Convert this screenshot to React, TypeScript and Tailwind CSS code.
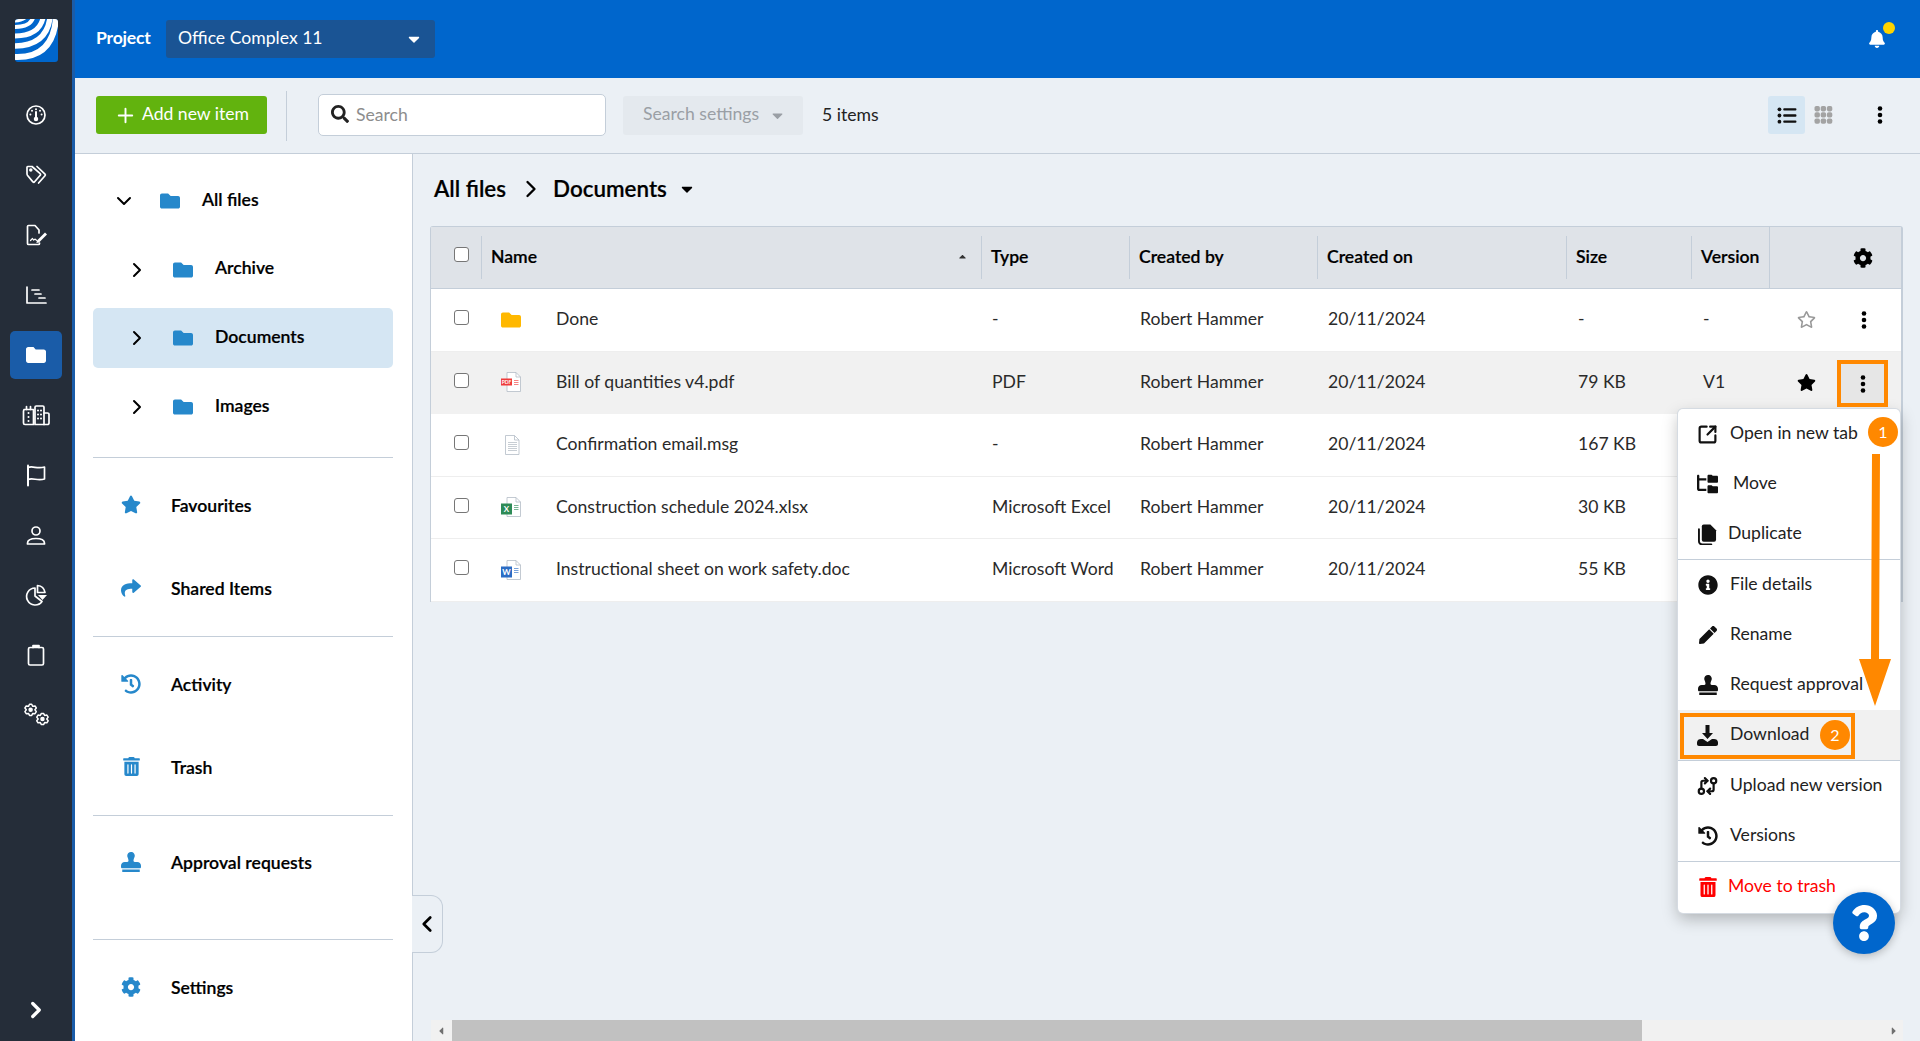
import React from "react";
import {
  FaStar, FaRegStar, FaShare, FaHistory, FaTrashAlt, FaStamp, FaCog, FaFolder, FaBell, FaSearch,
  FaCaretDown, FaInfoCircle, FaPen, FaCaretLeft, FaCaretRight, FaCaretUp, FaQuestion,
} from "react-icons/fa";
import { FaFolderTree } from "react-icons/fa6";
import { ChevronDown, ChevronLeft, ChevronRight, Plus, SquareArrowOutUpRight, GitCompareArrows } from "lucide-react";

const S = { fill: "none", stroke: "currentColor", strokeWidth: 1.7, strokeLinecap: "round" as const, strokeLinejoin: "round" as const };

function RailIcon({ children }: { children: React.ReactNode }) {
  return (
    <svg viewBox="0 0 24 24" className="w-6 h-6 text-white" {...S}>
      {children}
    </svg>
  );
}

function Kebab({ cls }: { cls?: string }) {
  return (
    <svg viewBox="0 0 6 18" className={`w-[6px] h-[18px] ${cls ?? ""}`} fill="#000">
      <circle cx="3" cy="2.500" r="2.300" />
      <circle cx="3" cy="9" r="2.300" />
      <circle cx="3" cy="15.500" r="2.300" />
    </svg>
  );
}

const railIcons: React.ReactNode[] = [
  <RailIcon key="g">
    <circle cx="12" cy="12" r="9" />
    <path d="M12 9v6" strokeWidth="2" />
    <circle cx="12" cy="16" r="1.400" fill="currentColor" />
    <path d="M8 7.800h.01M16 7.800h.01M6.400 11.500h.01M17.600 11.500h.01M12 6.200h.01" strokeWidth="2" />
  </RailIcon>,
  <RailIcon key="t">
    <path d="M3 7.500V4.200C3 3.800 3.300 3.500 3.700 3.500H8l8.200 7.200c.5.400.5 1.100 0 1.600l-5.600 6.500c-.4.500-1.200.5-1.700.1L3.400 12.200A3 3 0 0 1 3 10.600Z" />
    <path d="M13 3.500l8 7.600c.5.5.5 1.100 0 1.600L14.600 20" />
    <circle cx="6.800" cy="7" r=".9" fill="currentColor" />
  </RailIcon>,
  <RailIcon key="f">
    <path d="M15 10V7l-4-4.500H4.500a1 1 0 0 0-1 1v17a1 1 0 0 0 1 1h10a1 1 0 0 0 1-1V20" />
    <path d="M6.500 17.500l2-2 1.200 1.600 1.200-1 1.600 1.200" strokeWidth="1.200" />
    <path d="M13 17.500l8-8 2 2-8 8-2.600.6Z" fill="currentColor" stroke="none" />
  </RailIcon>,
  <RailIcon key="c">
    <path d="M3 4v16h19" />
    <path d="M8 7h7M11 11h6M15 15h6" />
  </RailIcon>,
  <svg key="fo" viewBox="0 0 24 24" className="w-6 h-6 text-white" fill="currentColor">
    <path d="M2 6.200C2 5 3 4 4.200 4h5.300l2.200 2.400h8.100C21 6.400 22 7.400 22 8.600v9.200c0 1.200-1 2.200-2.200 2.200H4.200C3 20 2 19 2 17.800Z" />
  </svg>,
  <svg key="b" viewBox="0 0 30 24" className="w-[30px] h-6 text-white" {...S}>
    <path d="M3 6.500h9.500V21.500H4a1.500 1.500 0 0 1-1.500-1.500V8A1.500 1.500 0 0 1 4 6.500Z" />
    <path d="M5.500 6.500V3.500M9.500 6.500V3.500" />
    <path d="M14 21.500V4.200A1.200 1.200 0 0 1 15.200 3h6.600A1.200 1.200 0 0 1 23 4.200V21.500Z" />
    <path d="M23 10h3.500a1.500 1.500 0 0 1 1.500 1.500v8.500a1.500 1.500 0 0 1-1.500 1.500H23" />
    <path d="M7.500 10h.01M7.500 14h.01M7.500 18h.01M17 7.500h.01M20 7.500h.01M17 11.500h.01M20 11.500h.01M17 15.500h.01M20 15.500h.01" strokeWidth="2" />
  </svg>,
  <RailIcon key="fl">
    <path d="M4 2.500v20" strokeWidth="2" />
    <path d="M4 4.500c5-2 9 1.800 16.500-.5v12c-7 2.200-11.500-1.500-16.500 .5" />
  </RailIcon>,
  <RailIcon key="u">
    <circle cx="12" cy="8" r="4" />
    <path d="M3.500 21v-.8c0-3 3-4.700 8.500-4.700s8.500 1.700 8.500 4.700v.8Z" />
  </RailIcon>,
  <RailIcon key="p">
    <path d="M11 5a8.500 8.500 0 1 0 7 13.500l-7-5.500Z" />
    <path d="M13.500 2.500A8.500 8.500 0 0 1 21 9.500h-7.500Z" />
    <path d="M14 12h9l-4.500 5Z" fill="currentColor" stroke="none" />
  </RailIcon>,
  <RailIcon key="cl">
    <rect x="4.500" y="4.500" width="15" height="17.500" rx="1.500" />
    <path d="M9 4.500V2.500h6v2" fill="currentColor" />
  </RailIcon>,
  <svg key="co" viewBox="0 0 26 22" className="w-[28px] h-[24px] text-white" {...S} strokeWidth="1.400">
    <path d="M9 1l1 1.900 2.100-.3 1.200 1.900-1.300 1.700 1.300 1.700-1.200 1.900-2.100-.3-1 1.900H7l-1-1.900-2.100.3L2.700 7.900 4 6.200 2.700 4.500l1.200-1.900L6 2.900 7 1Z" />
    <circle cx="8" cy="6.200" r="1.400" fill="currentColor" />
    <path d="M20 9.500l1 1.900 2.100-.3 1.200 1.900-1.300 1.700 1.300 1.700-1.200 1.900-2.100-.3-1 1.900h-2l-1-1.900-2.100.3-1.200-1.900 1.300-1.700-1.300-1.700 1.200-1.900 2.100.3 1-1.900Z" />
    <circle cx="19" cy="14.700" r="1.400" fill="currentColor" />
  </svg>,
];

function Logo() {
  return (
    <div className="w-[43px] h-[43px] rounded-[3px] bg-[#0066cc] overflow-hidden">
      <svg viewBox="0 0 43 43" className="w-full h-full" fill="none" stroke="white">
        <path d="M-1 2Q6 2 10-1" strokeWidth="3" />
        <path d="M-1 8Q15 8 18-1" strokeWidth="4" />
        <path d="M-1 17Q24 17 28-1" strokeWidth="5" />
        <path d="M-1 27Q31 27 35-1" strokeWidth="5.500" />
        <path d="M-1 38Q38 40 41-1" strokeWidth="6" />
      </svg>
    </div>
  );
}

function Rail() {
  return (
    <div className="w-[72px] h-full bg-[#252d39] flex flex-col items-center shrink-0">
      <div className="h-[85px] pt-[19px] shrink-0">
        <Logo />
      </div>
      {railIcons.map((ic, i) => (
        <div
          key={i}
          className={
            i === 4
              ? "w-[52px] h-[48px] my-[6px] rounded-[5px] bg-[#1a5ca8] flex items-center justify-center shrink-0"
              : "w-[52px] h-[60px] flex items-center justify-center shrink-0"
          }
        >
          {ic}
        </div>
      ))}
      <div className="mt-auto mb-[18px] text-white">
        <ChevronRight size={26} strokeWidth={3} />
      </div>
    </div>
  );
}

function Header() {
  return (
    <div className="h-[78px] bg-[#0066cc] flex items-center pl-[21px] pr-[34px] shrink-0">
      <span className="text-white font-bold text-[17.6px] tracking-[-0.2px] w-[70px] -mt-[1px]">Project</span>
      <div className="w-[269px] h-[38px] rounded-[3px] bg-[#1a5494] text-white text-[17.6px] flex items-center justify-between pl-3 pr-[12px] -mt-[1px]">
        <span className="-mt-[1px]">Office Complex 11</span>
        <FaCaretDown size={18} />
      </div>
      <div className="ml-auto relative text-white">
        <FaBell size={18} />
        <span className="absolute -top-[8px] left-[15px] w-3 h-3 rounded-full bg-[#ffd400]" />
      </div>
    </div>
  );
}

function Toolbar() {
  return (
    <div className="h-[76px] bg-[#ebf0f5] border-b border-[#c4ced9] flex items-center pl-[21px] pr-[37px] shrink-0">
      <button className="w-[171px] h-[38px] rounded-[3px] bg-[#62b30e] text-white text-[17.6px] flex items-center justify-center gap-[5px] -mt-[1px]">
        <Plus size={23} strokeWidth={2} />
        <span className="-mt-[2px]">Add new item</span>
      </button>
      <div className="w-px h-[50px] bg-[#c4ced9] ml-[19px] mr-[31px]" />
      <div className="w-[288px] h-[42px] rounded-[5px] bg-white border border-[#c4ced9] flex items-center pl-[12px] gap-[7px] text-[17.6px] text-[#8d8d8d] -mt-[1px]">
        <FaSearch size={18} className="text-[#222] -mt-[3px]" />
        Search
      </div>
      <div className="w-[180px] h-[39px] ml-[17px] rounded-[3px] bg-[#e4e9ee] text-[#9a9fa5] text-[17.6px] flex items-center pl-[20px] gap-[10px] -mt-[1px]">
        <span className="-mt-[1px]">Search settings</span>
        <FaCaretDown size={17} />
      </div>
      <span className="ml-[19px] text-[17.6px] text-[#222] -mt-[1px]">5 items</span>
      <div className="ml-auto w-[37px] h-[38px] rounded-[3px] bg-[#d5e6f3] flex items-center justify-center -mt-[1px]">
        <svg viewBox="0 0 20 18" className="w-5 h-[17px]" fill="#111">
          <circle cx="2" cy="2.500" r="2" /><circle cx="2" cy="9" r="2" /><circle cx="2" cy="15.500" r="2" />
          <rect x="6" y="1.300" width="14" height="2.400" rx="1" /><rect x="6" y="7.800" width="14" height="2.400" rx="1" /><rect x="6" y="14.300" width="14" height="2.400" rx="1" />
        </svg>
      </div>
      <div className="ml-[9px] w-[19px] h-[18px] -mt-[1px]">
        <svg viewBox="0 0 18 18" className="w-full h-full" fill="#a3a3a3">
          {[0, 6.2, 12.4].flatMap((y) =>
            [0, 6.2, 12.4].map((x) => <rect key={`${x}-${y}`} x={x} y={y} width="5.400" height="5.400" rx="1.800" />)
          )}
        </svg>
      </div>
      <Kebab cls="ml-[44px] -mt-[1px]" />
    </div>
  );
}

const BOLD = "font-semibold [-webkit-text-stroke:0.2px_black]";

function TreeRow({ label, chevron, active, first }: { label: string; chevron: "down" | "right"; active?: boolean; first?: boolean }) {
  return (
    <div
      className={`h-[60px] rounded-[5px] flex items-center text-[17.6px] text-black mb-[8.600px] ${BOLD} ${active ? "bg-[#d5e6f3]" : ""} ${
        first ? "pl-[19px]" : "pl-[32px]"
      }`}
    >
      {chevron === "down" ? <ChevronDown size={24} strokeWidth={2} /> : <ChevronRight size={24} strokeWidth={2} />}
      <FaFolder size={20} className="text-[#2688cb] ml-[24px]" />
      <span className="-mt-[2px] ml-[22px]">{label}</span>
    </div>
  );
}

function NavRow({ icon, label }: { icon: React.ReactNode; label: string }) {
  return (
    <div className={`h-[83px] flex items-center pl-[28px] pt-[2px] text-[17.6px] text-black ${BOLD}`}>
      <span className="w-[20px] flex justify-center text-[#2688cb] -mt-[2px]">{icon}</span>
      <span className="ml-[30px]">{label}</span>
    </div>
  );
}

function Divider() {
  return <div className="h-px bg-[#c4ced9] shrink-0" />;
}

function Sidebar() {
  return (
    <div className="w-[338px] h-full bg-white border-r border-[#c4ced9] pl-[18px] pr-[19px] pt-[17px] shrink-0 flex flex-col">
      <TreeRow label="All files" chevron="down" first />
      <TreeRow label="Archive" chevron="right" />
      <TreeRow label="Documents" chevron="right" active />
      <TreeRow label="Images" chevron="right" />
      <div className="mt-[12px]"><Divider /></div>
      <div className="pt-[5px] pb-[7px]">
        <NavRow icon={<FaStar size={21} />} label="Favourites" />
        <NavRow icon={<FaShare size={20} />} label="Shared Items" />
      </div>
      <Divider />
      <div className="pt-[5px] pb-[7px]">
        <NavRow icon={<FaHistory size={20} />} label="Activity" />
        <NavRow icon={<FaTrashAlt size={19} />} label="Trash" />
      </div>
      <Divider />
      <div className="pt-[4px] pb-[36px]">
        <NavRow icon={<FaStamp size={20} />} label="Approval requests" />
      </div>
      <Divider />
      <div className="pt-[5px]">
        <NavRow icon={<FaCog size={20} />} label="Settings" />
      </div>
    </div>
  );
}

const COLS = ["w-[50px]", "w-[500px]", "w-[148px]", "w-[188px]", "w-[249px]", "w-[125px]", "w-[78px]", "w-[133px]"];

function HeadCell({ i, children }: { i: number; children?: React.ReactNode }) {
  return <div className={`${COLS[i]} h-full flex items-center shrink-0`}>{children}</div>;
}

function Checkbox() {
  return <span className="block w-[15px] h-[15px] rounded-[3px] border border-[#767676] bg-white -mt-[4px]" />;
}

function HeaderRow() {
  const labels = ["Type", "Created by", "Created on", "Size", "Version"];
  return (
    <div className={`h-[62px] flex bg-[#dfe3e8] border-b border-[#c4ced9] text-[17.6px] text-black ${BOLD}`}>
      <HeadCell i={0}>
        <div className="pl-[23px] -mt-[2px]"><Checkbox /></div>
      </HeadCell>
      <div className={`${COLS[1]} relative flex items-center shrink-0 pl-[10px]`}>
        <span>Name</span>
        <FaCaretUp size={11} className="absolute right-[13px] top-[24px] text-[#333]" />
        <span className="absolute left-0 top-[9px] bottom-[9px] w-px bg-[#c4ced9]" />
      </div>
      {labels.map((l, k) => (
        <div key={l} className={`${COLS[k + 2]} relative flex items-center shrink-0 pl-[10px]`}>
          <span>{l}</span>
          <span className="absolute left-0 top-[9px] bottom-[9px] w-px bg-[#c4ced9]" />
        </div>
      ))}
      <div className="flex-1 relative flex items-center justify-end pr-[28px] border-l border-[#c4ced9]">
        <FaCog size={20} />
      </div>
    </div>
  );
}

function FileIcon({ kind }: { kind: string }) {
  if (kind === "folder") return <FaFolder size={20} className="text-[#ffb800]" />;
  const tag: Record<string, [string, string]> = {
    pdf: ["#ef3b3b", "PDF"],
    xls: ["#2e8b57", "X"],
    doc: ["#2b6cc4", "W"],
  };
  const t = tag[kind];
  return (
    <svg viewBox="0 0 20 20" className="w-5 h-5">
      <path d="M6 .5h9l4.500 4.500v14.500h-13.500Z" fill="#fff" stroke="#b4bcc6" strokeWidth="0.800" transform={t ? "" : "translate(-1.500 0)"} />
      <path d="M15 .5v4.500h4.500" fill="none" stroke="#b4bcc6" strokeWidth="0.800" transform={t ? "" : "translate(-1.500 0)"} />
      {t ? (
        <>
          <path d="M13 8.500h4.500M13 10.500h4.500M13 12.500h4.500" stroke={t[0]} strokeWidth="0.900" opacity="0.700" />
          <rect x="0" y="6.500" width="11" height={kind === "pdf" ? 7 : 11} fill={t[0]} />
          <text x="5.500" y={kind === "pdf" ? 12 : 14.500} fontSize={kind === "pdf" ? 5 : 8} fontWeight="700" fill="#fff" textAnchor="middle" fontFamily="Lato">
            {t[1]}
          </text>
        </>
      ) : (
        <path d="M7 7.500h9M7 9.500h9M7 11.500h9M7 13.500h9M7 15.500h9" stroke="#c2c8cf" strokeWidth="0.900" />
      )}
    </svg>
  );
}

type Row = { kind: string; name: string; type: string; size: string; ver: string; starred?: boolean; hover?: boolean };

const rows: Row[] = [
  { kind: "folder", name: "Done", type: "-", size: "-", ver: "-" },
  { kind: "pdf", name: "Bill of quantities v4.pdf", type: "PDF", size: "79 KB", ver: "V1", starred: true, hover: true },
  { kind: "file", name: "Confirmation email.msg", type: "-", size: "167 KB", ver: "" },
  { kind: "xls", name: "Construction schedule 2024.xlsx", type: "Microsoft Excel", size: "30 KB", ver: "" },
  { kind: "doc", name: "Instructional sheet on work safety.doc", type: "Microsoft Word", size: "55 KB", ver: "" },
];

function TableRow({ r }: { r: Row }) {
  return (
    <div
      className={`h-[62.500px] flex items-center text-[17.6px] text-[#2a2a2a] border-b ${
        r.hover ? "bg-[#f1f1f1] border-[#f1f1f1]" : "bg-white border-[#eeeeee]"
      }`}
    >
      <HeadCell i={0}>
        <div className="pl-[23px]"><Checkbox /></div>
      </HeadCell>
      <div className={`${COLS[1]} flex items-center shrink-0`}>
        <span className="w-[20px] ml-[20px] flex justify-center"><FileIcon kind={r.kind} /></span>
        <span className="ml-[35px] -mt-[0.500px]">{r.name}</span>
      </div>
      <div className={`${COLS[2]} pl-[11px] shrink-0 -mt-[0.500px]`}>{r.type}</div>
      <div className={`${COLS[3]} pl-[11px] shrink-0 -mt-[0.500px]`}>Robert Hammer</div>
      <div className={`${COLS[4]} pl-[11px] shrink-0 -mt-[0.500px]`}>20/11/2024</div>
      <div className={`${COLS[5]} pl-[12px] shrink-0 -mt-[0.500px]`}>{r.size}</div>
      <div className={`${COLS[6]} pl-[12px] shrink-0 -mt-[0.500px]`}>{r.ver}</div>
      <div className="flex-1 flex items-center">
        {r.kind === "folder" || r.starred ? (
          <span className="w-[20px] ml-[27px] flex justify-center">
            {r.starred ? <FaStar size={19} className="text-black" /> : <FaRegStar size={19} className="text-[#999]" />}
          </span>
        ) : null}
        {r.kind === "folder" && <Kebab cls="ml-[45px]" />}
      </div>
    </div>
  );
}

function Table() {
  return (
    <div className="w-[1473px] bg-white border border-[#c4ced9] border-b-0 border-r-2 rounded-t-[3px]">
      <HeaderRow />
      {rows.map((r) => (
        <TableRow key={r.name} r={r} />
      ))}
    </div>
  );
}

function Main() {
  return (
    <div className="relative flex-1 h-full bg-[#ebf0f5] pl-[17px] flex flex-col">
      <div className={`h-[74px] flex items-center text-[22.4px] text-black -mt-[2px] pl-[4px] shrink-0 ${BOLD}`}>
        <span>All files</span>
        <ChevronRight size={28} strokeWidth={2} className="ml-[11px]" />
        <span className="ml-[8px]">Documents</span>
        <FaCaretDown size={18} className="ml-[11px]" />
      </div>
      <Table />
      <div className="absolute bottom-0 left-[18px] w-[1472px] h-[21px] bg-[#f1f1f1] flex items-center text-[#707070]">
        <FaCaretLeft size={12} className="ml-[4px]" />
        <div className="ml-[5px] w-[1190px] h-full bg-[#c1c1c1]" />
        <FaCaretRight size={12} className="ml-auto mr-[3px]" />
      </div>
      <div className="absolute left-0 top-[741px] w-[31px] h-[58px] bg-[#ebf0f5] border border-l-0 border-[#c4ced9] rounded-r-[12px] flex items-center justify-center -ml-px">
        <ChevronLeft size={26} strokeWidth={2.500} className="text-black" />
      </div>
    </div>
  );
}

function MenuItem({ icon, label, gap, color, hover }: { icon: React.ReactNode; label: string; gap?: string; color?: string; hover?: boolean }) {
  return (
    <div className={`h-[50px] flex items-center pl-[19px] text-[17.6px] ${color ?? "text-[#222]"} ${hover ? "bg-[#f1f1f1]" : ""}`}>
      <span className="w-[21px] flex justify-center">{icon}</span>
      <span className={`-mt-[1px] ${gap ?? "ml-[12px]"}`}>{label}</span>
    </div>
  );
}

function DownloadIcon() {
  return (
    <svg viewBox="0 0 21 21" className="w-[21px] h-[21px]" fill="#111">
      <path d="M8.500 0h4v8h3.500l-5.500 6-5.500-6h3.500Z" />
      <path d="M0 17.500c0-2.500 2-3.500 4-3.500h2l4.500 3 4.500-3h2c2 0 4 1 4 3.500V19c0 1-.8 2-2 2H2c-1.200 0-2-1-2-2Z" />
    </svg>
  );
}

function Menu() {
  return (
    <div className="absolute left-[1678px] top-[409px] w-[222px] pb-[1px] rounded-[5px] bg-white shadow-[0_0_0_1px_#d5dbe2,0_6px_16px_rgba(0,0,0,0.25)] flex flex-col overflow-hidden">
      <MenuItem icon={<SquareArrowOutUpRight size={23} strokeWidth={2.500} className="text-[#111]" />} label="Open in new tab" />
      <MenuItem icon={<FaFolderTree size={22} className="text-[#111]" />} label="Move" gap="ml-[15px]" />
      <MenuItem
        icon={
          <svg viewBox="0 0 20 21" className="w-[19px] h-[21px]" fill="#111">
            <path d="M6 0h7l6 6v10a2 2 0 0 1-2 2H6a2 2 0 0 1-2-2V2a2 2 0 0 1 2-2Z" />
            <path d="M1 5v12.500A3.500 3.500 0 0 0 4.500 21H14" fill="none" stroke="#111" strokeWidth="2" strokeLinecap="round" />
          </svg>
        }
        label="Duplicate"
        gap="ml-[10px]"
      />
      <div className="h-px bg-[#c4ced9]" />
      <MenuItem icon={<FaInfoCircle size={20} className="text-[#111]" />} label="File details" />
      <MenuItem icon={<FaPen size={18} className="text-[#111]" />} label="Rename" />
      <MenuItem icon={<FaStamp size={20} className="text-[#111]" />} label="Request approval" />
      <MenuItem icon={<DownloadIcon />} label="Download" hover />
      <div className="h-px bg-[#c4ced9]" />
      <MenuItem icon={<GitCompareArrows size={24} strokeWidth={2.500} className="text-[#111] -scale-x-100" />} label="Upload new version" />
      <MenuItem icon={<FaHistory size={20} className="text-[#111]" />} label="Versions" />
      <div className="h-px bg-[#c4ced9]" />
      <MenuItem icon={<FaTrashAlt size={20} className="text-[#ff0000]" />} label="Move to trash" gap="ml-[10px]" color="text-[#ff0000]" />
    </div>
  );
}

function Badge({ n, cls }: { n: string; cls: string }) {
  return (
    <span className={`absolute w-[30px] h-[30px] rounded-full bg-[#ff8800] text-white text-[16px] flex items-center justify-center ${cls}`}>
      {n}
    </span>
  );
}

function Overlays() {
  return (
    <>
      <Menu />
      <div className="absolute left-[1837px] top-[360px] w-[51px] h-[47px] border-[4px] border-[#ff8800] bg-[#e6e6e6] flex items-center justify-center">
        <Kebab />
      </div>
      <Badge n="1" cls="left-[1868px] top-[417px]" />
      <svg className="absolute left-[1855px] top-[450px] w-[40px] h-[260px]" viewBox="0 0 40 260" fill="#ff8800">
        <path d="M17 4h8l-1 205h12l-16 47-16-47h12Z" />
      </svg>
      <div className="absolute left-[1680px] top-[713px] w-[175px] h-[46px] border-[4px] border-[#ff8800]" />
      <Badge n="2" cls="left-[1820px] top-[720px]" />
      <div className="absolute left-[1833px] top-[892px] w-[62px] h-[62px] rounded-full bg-[#0066cc] text-white flex items-center justify-center shadow-[0_2px_8px_rgba(0,0,0,0.25)]">
        <FaQuestion size={36} />
      </div>
    </>
  );
}

export default function App() {
  return (
    <div className="relative w-[1920px] h-[1041px] overflow-hidden flex font-['Lato',sans-serif]">
      <Rail />
      <div className="w-[3px] h-full bg-[#1a5ca8] shrink-0" />
      <div className="flex-1 h-full flex flex-col min-w-0">
        <Header />
        <Toolbar />
        <div className="flex-1 flex min-h-0">
          <Sidebar />
          <Main />
        </div>
      </div>
      <Overlays />
    </div>
  );
}
